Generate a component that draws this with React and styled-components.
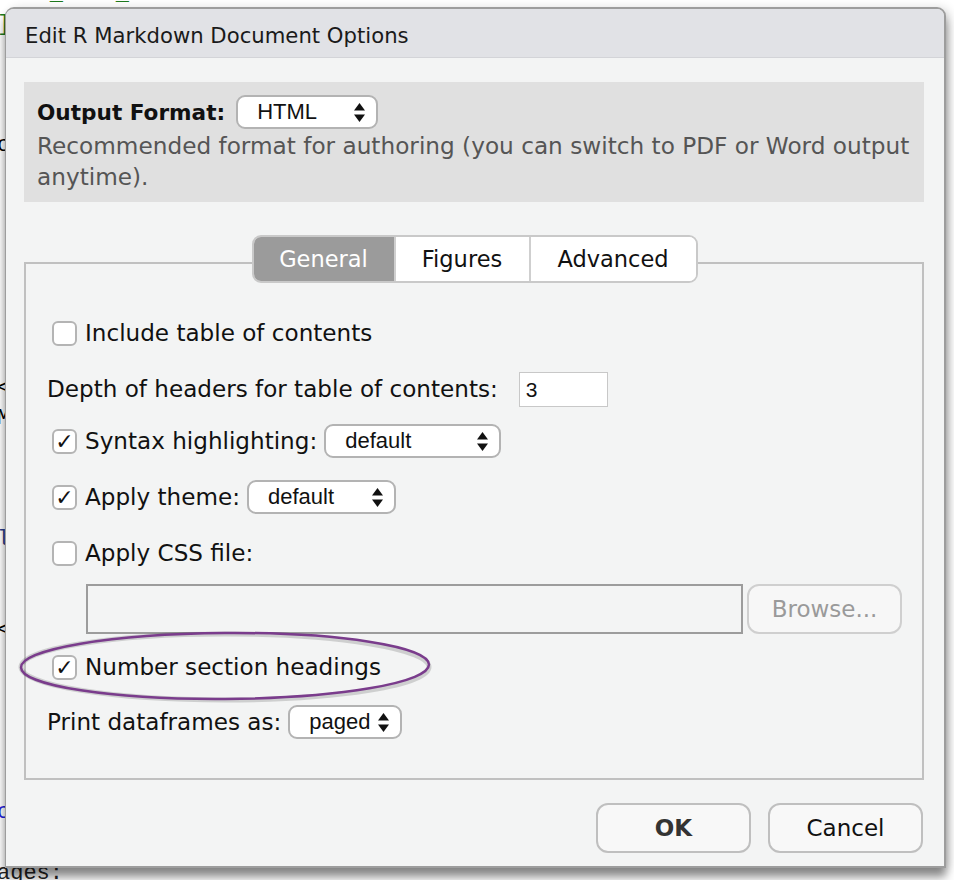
import React from 'react';
import styled, { createGlobalStyle } from 'styled-components';

const GlobalStyle = createGlobalStyle`
    body {
        margin: 0;
        background: #ffffff;
        overflow: hidden;
    }
`

const codeLines = [
    { text: 'name_here_1"', color: '#1d7a1d' },
    { text: ']', color: '#1d7a1d' },
    { text: '', color: '#000' },
    { text: '', color: '#000' },
    { text: '', color: '#000' },
    { text: 'c', color: '#000' },
    { text: '', color: '#000' },
    { text: '', color: '#000' },
    { text: '', color: '#000' },
    { text: '', color: '#000' },
    { text: '', color: '#000' },
    { text: '', color: '#000' },
    { text: '', color: '#000' },
    { text: '<', color: '#000' },
    { text: 'M', color: '#000' },
    { text: '', color: '#000' },
    { text: '', color: '#000' },
    { text: '', color: '#000' },
    { text: 'l', color: '#2b3f8a' },
    { text: '', color: '#000' },
    { text: '', color: '#000' },
    { text: '<', color: '#000' },
    { text: '', color: '#000' },
    { text: '', color: '#000' },
    { text: '', color: '#000' },
    { text: '', color: '#000' },
    { text: '', color: '#000' },
    { text: 'c', color: '#2222dd' },
    { text: '', color: '#000' },
    { text: 'ages:', color: '#222' },
]

const ArrowsIcon = () => (
    <svg width="11" height="19" viewBox="0 0 11 19">
        <polygon points="5.5,0 11,7.5 0,7.5" fill="#111" />
        <polygon points="0,11.5 11,11.5 5.5,19" fill="#111" />
    </svg>
)

const Check = ({ checked }) => (
    <CheckBox>{checked ? '✓' : ''}</CheckBox>
)

const Dropdown = ({ value, width }) => (
    <Select $width={width}>
        <span>{value}</span>
        <ArrowsIcon />
    </Select>
)

const App = () => {
    return (
        <Screen>
            <GlobalStyle />
            <Editor>
                {codeLines.map((line, i) => (
                    <CodeLine key={i} $color={line.color}>{line.text || ' '}</CodeLine>
                ))}
            </Editor>
            <Dialog>
                <TitleBar>Edit R Markdown Document Options</TitleBar>
                <Body>
                    <FormatBox>
                        <FormatRow>
                            <Strong>Output Format:</Strong>
                            <Dropdown value="HTML" width={142} />
                        </FormatRow>
                        <Description>
                            Recommended format for authoring (you can switch to PDF or Word output anytime).
                        </Description>
                    </FormatBox>
                    <Panel>
                        <TabBar>
                            <Tab $active $width={140}>General</Tab>
                            <Tab $width={133}>Figures</Tab>
                            <Tab $width={165}>Advanced</Tab>
                        </TabBar>
                        <Row $mt={32} $indent>
                            <Check />
                            <Label>Include table of contents</Label>
                        </Row>
                        <Row $mt={20}>
                            <Label>Depth of headers for table of contents:</Label>
                            <NumberInput>3</NumberInput>
                        </Row>
                        <Row $mt={16} $indent>
                            <Check checked />
                            <Label>Syntax highlighting:</Label>
                            <Dropdown value="default" width={177} />
                        </Row>
                        <Row $mt={20} $indent>
                            <Check checked />
                            <Label>Apply theme:</Label>
                            <Dropdown value="default" width={149} />
                        </Row>
                        <Row $mt={20} $indent>
                            <Check />
                            <Label>Apply CSS file:</Label>
                        </Row>
                        <FileRow>
                            <FileInput />
                            <BrowseButton>Browse...</BrowseButton>
                        </FileRow>
                        <Row $mt={15} $indent>
                            <Check checked />
                            <Label>Number section headings</Label>
                            <Circle viewBox="0 0 416 74">
                                <ellipse cx="207" cy="36" rx="204" ry="33" fill="none" stroke="rgba(0,0,0,0.15)" strokeWidth="5" />
                                <ellipse cx="207" cy="35" rx="204" ry="33" fill="none" stroke="#7a3c8c" strokeWidth="2.5" transform="rotate(-0.4 207 35)" />
                            </Circle>
                        </Row>
                        <Row $mt={19}>
                            <Label>Print dataframes as:</Label>
                            <Dropdown value="paged" width={114} />
                        </Row>
                    </Panel>
                    <Footer>
                        <Button $primary>OK</Button>
                        <Button>Cancel</Button>
                    </Footer>
                </Body>
            </Dialog>
        </Screen>
    )
}

export default App;

const Screen = styled.div`
    position: relative;
    width: 954px;
    height: 880px;
    overflow: hidden;
    background: #ffffff;
`

const Editor = styled.div`
    margin-top: -20px;
    margin-left: -3px;
    font-family: "Liberation Mono", monospace;
    font-size: 22px;
    line-height: 30.3px;
`

const CodeLine = styled.div`
    color: ${p => p.$color};
    white-space: pre;
`

const Dialog = styled.div`
    position: absolute;
    left: 5px;
    top: 7px;
    width: 941px;
    height: 861px;
    box-sizing: border-box;
    border: 2px solid #9d9d9d;
    border-left-width: 1px;
    border-radius: 9px 9px 0 0;
    background: #f3f4f4;
    box-shadow: 0 9px 10px rgba(0, 0, 0, 0.45), 4px 0 10px rgba(0, 0, 0, 0.12);
    display: flex;
    flex-direction: column;
    font-family: "DejaVu Sans", sans-serif;
    color: #111;
    overflow: hidden;
`

const TitleBar = styled.div`
    height: 49px;
    flex-shrink: 0;
    box-sizing: border-box;
    padding: 14px 0 0 19px;
    background: #e1e2e6;
    border-bottom: 1px solid #d3d4d8;
    font-size: 21.2px;
    color: #1a1a1a;
`

const Body = styled.div`
    flex: 1;
    display: flex;
    flex-direction: column;
    padding: 24px 20px 0 18px;
`

const FormatBox = styled.div`
    height: 120px;
    box-sizing: border-box;
    padding: 13px 13px 0;
    background: #e0e0e0;
`

const FormatRow = styled.div`
    display: flex;
    align-items: center;
    gap: 11px;
`

const Strong = styled.span`
    font-weight: bold;
    font-size: 21.6px;
    color: #111;
`

const Description = styled.div`
    margin-top: 1px;
    font-size: 23.2px;
    line-height: 31px;
    color: #555;
`

const Select = styled.div`
    width: ${p => p.$width}px;
    height: 34px;
    box-sizing: border-box;
    display: flex;
    align-items: center;
    justify-content: space-between;
    padding: 0 11px 0 19px;
    background: #fff;
    border: 2px solid #b3b3b3;
    border-radius: 9px;
    font-family: "Liberation Sans", Arial, sans-serif;
    font-size: 22px;
    color: #111;
`

const Panel = styled.div`
    margin-top: 60px;
    height: 518px;
    box-sizing: border-box;
    border: 2px solid #c0c0c0;
    display: flex;
    flex-direction: column;
    padding: 0 20px 0 21px;
`

const TabBar = styled.div`
    align-self: center;
    margin-top: -29px;
    height: 48px;
    box-sizing: border-box;
    display: flex;
    border: 2px solid #c9c9c9;
    border-radius: 9px;
    overflow: hidden;
    background: #fff;
`

const Tab = styled.div`
    width: ${p => p.$width}px;
    display: flex;
    align-items: center;
    justify-content: center;
    font-size: 22.5px;
    background: ${p => p.$active ? '#9b9b9b' : '#ffffff'};
    color: ${p => p.$active ? '#ffffff' : '#111'};
    & + & {
        border-left: 2px solid #cfcfcf;
    }
`

const Row = styled.div`
    position: relative;
    height: 36px;
    margin-top: ${p => p.$mt}px;
    margin-left: ${p => p.$indent ? 5 : 0}px;
    display: flex;
    align-items: center;
`

const CheckBox = styled.div`
    width: 25px;
    height: 25px;
    box-sizing: border-box;
    margin-right: 8px;
    border: 2px solid #b4b4b4;
    border-radius: 6px;
    background: #fff;
    display: flex;
    align-items: center;
    justify-content: center;
    font-size: 22px;
    font-weight: bold;
    color: #111;
`

const Label = styled.span`
    font-size: 23.1px;
    color: #111;
    margin-right: 7px;
`

const NumberInput = styled.div`
    width: 89px;
    height: 35px;
    box-sizing: border-box;
    margin-left: 14px;
    padding: 5px 0 0 6px;
    background: #fff;
    border: 1px solid #c8c8c8;
    font-family: "Liberation Sans", Arial, sans-serif;
    font-size: 21px;
`

const FileRow = styled.div`
    margin: 13px 0 0 39px;
    display: flex;
    gap: 4px;
    height: 50px;
`

const FileInput = styled.div`
    flex: 1;
    box-sizing: border-box;
    border: 2px solid #9c9c9c;
`

const BrowseButton = styled.div`
    width: 155px;
    box-sizing: border-box;
    display: flex;
    align-items: center;
    justify-content: center;
    border: 2px solid #cfcfcf;
    border-radius: 12px;
    background: #f7f7f7;
    font-size: 23px;
    color: #9a9a9a;
`

const Circle = styled.svg`
    position: absolute;
    left: -34px;
    top: -18px;
    width: 416px;
    height: 74px;
    overflow: visible;
    pointer-events: none;
`

const Footer = styled.div`
    display: flex;
    justify-content: flex-end;
    gap: 17px;
    margin-top: 23px;
    padding-right: 1px;
`

const Button = styled.div`
    width: 155px;
    height: 50px;
    box-sizing: border-box;
    display: flex;
    align-items: center;
    justify-content: center;
    border: 2px solid #bfbfbf;
    border-radius: 12px;
    background: #f8f8f8;
    font-size: 23px;
    font-weight: ${p => p.$primary ? 'bold' : 'normal'};
    color: ${p => p.$primary ? '#333' : '#111'};
`
